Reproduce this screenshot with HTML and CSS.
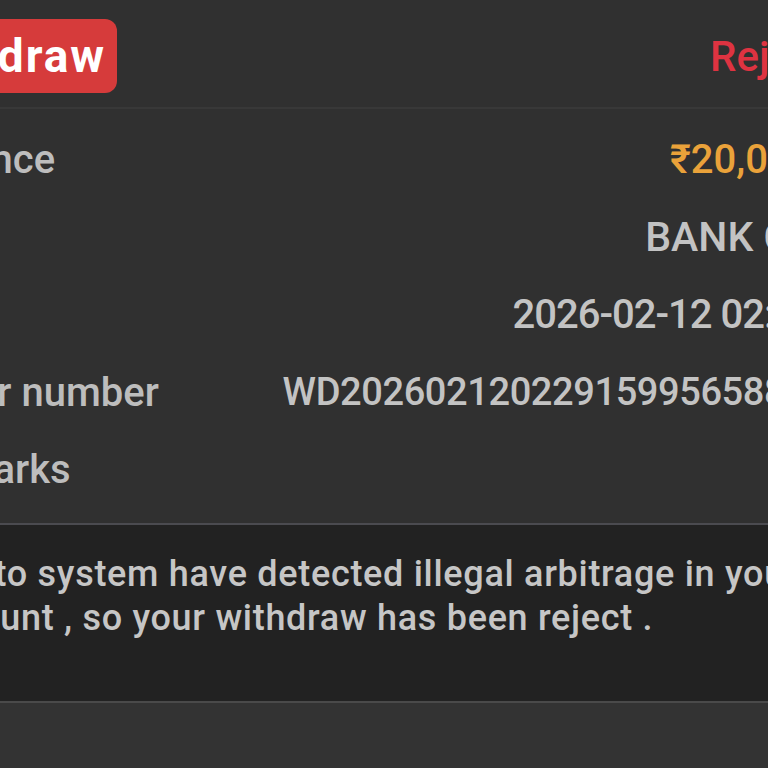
FILE: index.html
```html
<!DOCTYPE html>
<html lang="en">
<head>
<meta charset="utf-8">
<title>Withdraw detail</title>
<link rel="stylesheet" href="styles.css">
</head>
<body>
<div class="page">
  <div class="header">
    <span class="badge">Withdraw</span>
    <span class="status">Rejected</span>
  </div>
  <div class="rows">
    <div class="row"><span class="label">Balance</span><span class="value amount">₹20,000.00</span></div>
    <div class="row"><span class="label">Type</span><span class="value">BANK CARD</span></div>
    <div class="row"><span class="label">Date</span><span class="value date">2026-02-12 02:29:15</span></div>
    <div class="row"><span class="label">Order number</span><span class="value order">WD2026021202291599565884127</span></div>
    <div class="row"><span class="label">Remarks</span><span class="value"></span></div>
  </div>
  <div class="remark-box">
    <p class="remark-text">Due to system have detected illegal arbitrage in your<br>account , so your withdraw has been reject .</p>
  </div>
</div>
</body>
</html>
```

FILE: styles.css
```css
html, body {
  margin: 0;
  padding: 0;
  overflow: hidden;
  background: #333333;
}

body {
  width: 768px;
  height: 768px;
  font-family: Roboto, "Noto Sans", sans-serif;
  font-weight: 500;
}

.page {
  margin-left: -88px;
  width: 958px;
  background: #303030;
}

.header {
  display: flex;
  justify-content: space-between;
  align-items: center;
  padding: 19px 0 14px 0;
  border-bottom: 2px solid #383838;
}

.badge {
  display: block;
  height: 74px;
  line-height: 74px;
  margin-left: -20px;
  padding: 0 11px 0 4px;
  background: #d63b3b;
  color: #ffffff;
  font-size: 46px;
  font-weight: 700;
  letter-spacing: 2px;
  border-radius: 12px;
  white-space: nowrap;
}

.status {
  color: #de3341;
  font-size: 42px;
  margin-right: -4px;
  white-space: nowrap;
}

.rows {
  padding-top: 12px;
  padding-bottom: 14px;
}

.row {
  display: flex;
  justify-content: space-between;
  align-items: center;
  height: 77.5px;
}

.label {
  font-size: 40px;
  color: #bdbdbd;
  white-space: nowrap;
}

.value {
  font-size: 41px;
  color: #c3c3c3;
  white-space: nowrap;
}

.amount {
  color: #eaa23a;
  font-size: 40px;
}

.date {
  font-size: 40px;
  letter-spacing: -1px;
}

.order {
  font-size: 38px;
  letter-spacing: -0.4px;
}

.remark-box {
  background: #222222;
  border-top: 2px solid #4b4b50;
  border-bottom: 2px solid #4a4a4a;
  height: 176px;
  padding: 0 0 0 8px;
}

.remark-text {
  margin: 0;
  padding-top: 27px;
  font-size: 36px;
  line-height: 44px;
  letter-spacing: 0.7px;
  color: #c6c6c6;
  white-space: nowrap;
}
```
